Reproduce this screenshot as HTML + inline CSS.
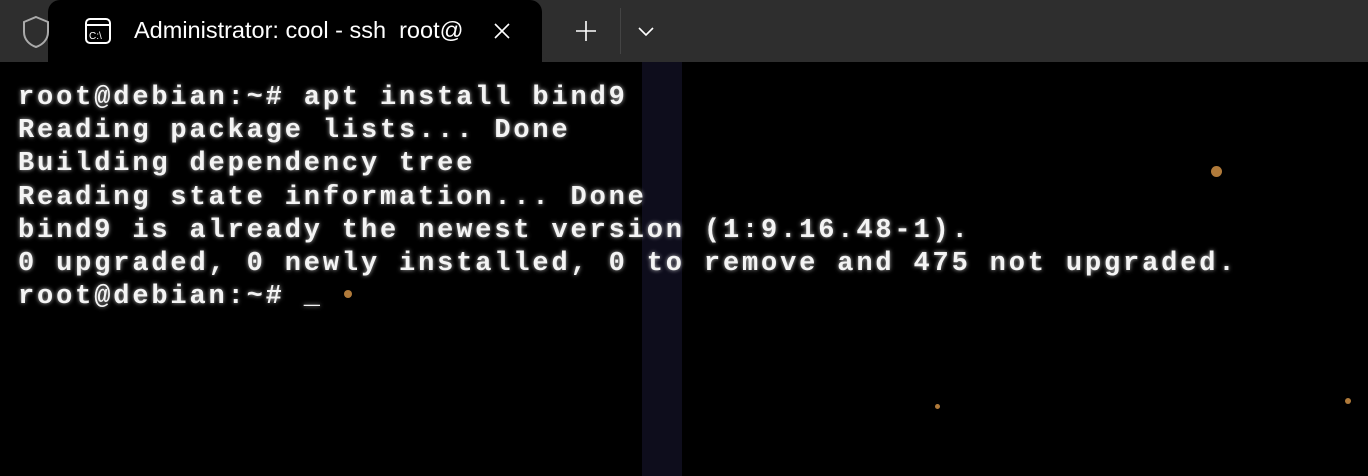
<!DOCTYPE html>
<html><head><style>
body{margin:0;width:1368px;height:476px;background:#000;overflow:hidden;position:relative;font-family:"Liberation Sans",sans-serif}
.g{position:absolute;background:#2e2e2e}
.strip{position:absolute;left:642px;top:62px;width:40px;height:414px;background:#0e0d1c}
.tab{position:absolute;left:48px;top:0;width:494px;height:70px;background:#000;border-radius:12px 12px 0 0}
.term{position:absolute;left:18px;top:82px;font-family:"Liberation Mono",monospace;font-weight:bold;font-size:27px;letter-spacing:2.85px;line-height:33.2px;color:#f4f4f4;white-space:pre;text-shadow:0 0 4px rgba(255,255,255,.7)}
.dot{position:absolute;border-radius:50%;background:#b07a3a}
</style></head><body>
<div class="g" style="left:0;top:0;width:1368px;height:62px"></div>
<div class="g" style="left:0;top:0;width:48px;height:62px;border-radius:0 0 12px 0"></div>
<div style="position:absolute;left:0;top:62px;width:48px;height:10px;background:#000"></div>
<div class="g" style="left:542px;top:0;width:826px;height:62px;border-radius:0 0 0 14px"></div>
<div class="strip"></div>
<div class="tab"></div>
<svg style="position:absolute;left:20px;top:14px" width="32" height="36" viewBox="0 0 32 36"><path d="M16 3 L28 8 V18 C28 26 22 31 16 33 C10 31 4 26 4 18 V8 Z" fill="none" stroke="#aaa" stroke-width="2"/></svg>
<svg style="position:absolute;left:84px;top:17px" width="28" height="28" viewBox="0 0 28 28"><rect x="2" y="2" width="24" height="24" rx="4" fill="none" stroke="#fff" stroke-width="2"/><line x1="2" y1="8" x2="26" y2="8" stroke="#fff" stroke-width="2"/><text x="5" y="22" font-size="10" fill="#fff" font-family="Liberation Sans">C:\</text></svg>
<div style="position:absolute;left:134px;top:17px;font-size:23.5px;color:#fff;width:328px;overflow:hidden;white-space:nowrap">Administrator: cool - ssh &nbsp;root@</div>
<svg style="position:absolute;left:492px;top:21px" width="20" height="20"><path d="M3 3L17 17M17 3L3 17" stroke="#fff" stroke-width="1.6"/></svg>
<svg style="position:absolute;left:574px;top:19px" width="24" height="24"><path d="M12 2V22M2 12H22" stroke="#fff" stroke-width="1.6"/></svg>
<div style="position:absolute;left:620px;top:8px;width:1px;height:46px;background:#444"></div>
<svg style="position:absolute;left:637px;top:24px" width="18" height="14"><path d="M2 4L9 11L16 4" fill="none" stroke="#fff" stroke-width="1.6"/></svg>
<div class="dot" style="left:1211px;top:166px;width:11px;height:11px"></div>
<div class="dot" style="left:344px;top:290px;width:8px;height:8px"></div>
<div class="dot" style="left:935px;top:404px;width:5px;height:5px"></div>
<div class="dot" style="left:1345px;top:398px;width:6px;height:6px"></div>
<div class="term">root@debian:~# apt install bind9
Reading package lists... Done
Building dependency tree
Reading state information... Done
bind9 is already the newest version (1:9.16.48-1).
0 upgraded, 0 newly installed, 0 to remove and 475 not upgraded.
root@debian:~# _</div>
</body></html>
